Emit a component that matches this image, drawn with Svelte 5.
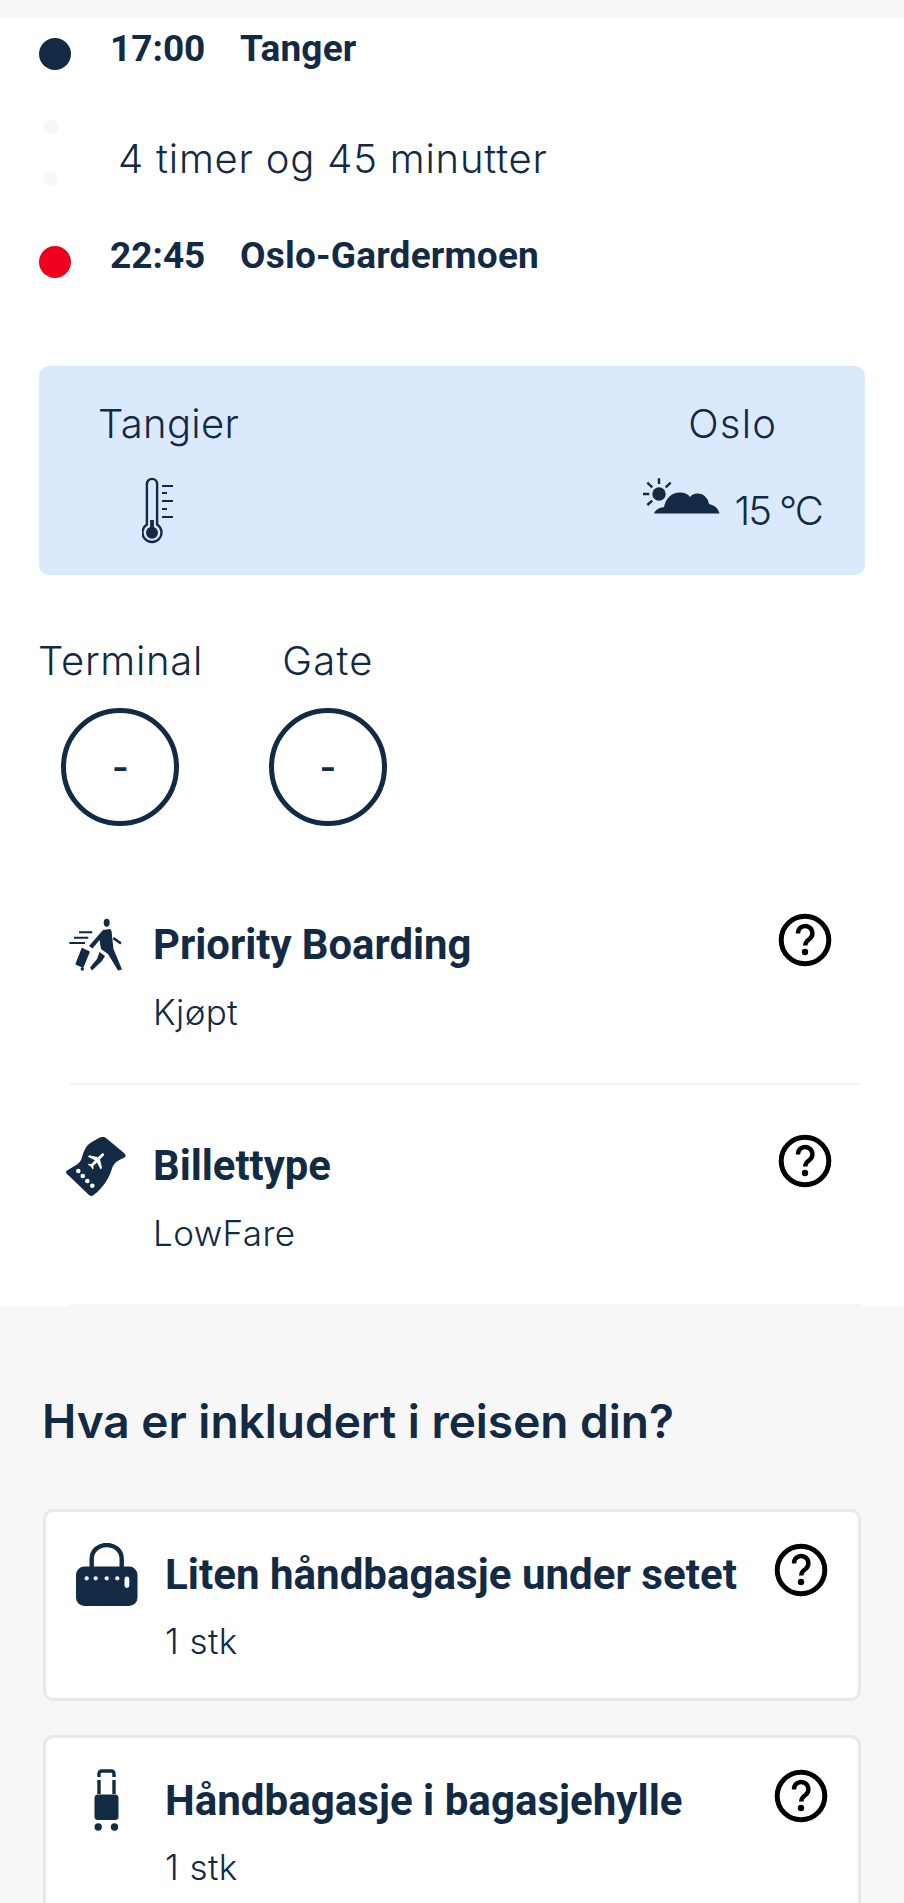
<script>
	const flightExtras = [
		{ title: 'Priority Boarding', sub: 'Kjøpt', icon: 'priority' },
		{ title: 'Billettype', sub: 'LowFare', icon: 'ticket' }
	];
	const included = [
		{ title: 'Liten håndbagasje under setet', sub: '1 stk', icon: 'bag' },
		{ title: 'Håndbagasje i bagasjehylle', sub: '1 stk', icon: 'trolley' }
	];
</script>

{#snippet help()}
	<svg class="help" width="54" height="54" viewBox="0 0 54 54" fill="none" stroke="#000">
		<circle cx="27" cy="27" r="23.800" stroke-width="5" />
		<path d="M20 20.500a7.200 7.200 0 1 1 11.500 5.500c-3 2-4.300 3.500-4.300 6.500" stroke-width="4.400" />
		<circle cx="27" cy="39" r="3.200" fill="#000" stroke="none" />
	</svg>
{/snippet}

{#snippet icon(name)}
	{#if name === 'priority'}
		<svg width="60" height="60" viewBox="0 0 60 60" fill="#132a45">
			<ellipse cx="41.700" cy="6.700" rx="3" ry="4" />
			<path d="M38 14L45 13Q47 14 47 20L48.500 33L57 53.500L53 54.500L43 38L36 33L34.500 24L27.500 32.500L24 30Z" />
			<path d="M34.500 36L40 40L37 45L27 54.500L25 51.500L32 43Z" />
			<path d="M48.300 22L56 27.500" fill="none" stroke="#132a45" stroke-width="2.600" />
			<path d="M17.200 32.700L24 36L17.800 51L11.200 48Z" stroke="#132a45" stroke-width="1.600" stroke-linejoin="round" />
			<circle cx="17.300" cy="53" r="1.700" />
			<path d="M14 16.300h13.300M9 21.700h14.300M4.300 27h15.700" fill="none" stroke="#132a45" stroke-width="2" />
		</svg>
	{:else if name === 'ticket'}
		<svg width="62" height="60" viewBox="0 0 62 60" fill="#132a45">
			<path d="M33 1.500Q38-1.500 41 1L59 16Q62 19 59.500 20.500Q50 24 47.500 30Q44 42 37 50Q33 55 28 58.500Q26 59.500 24 58L2 37Q0 35 2 33.500L12 27.500Q16 25 17 20Q20 9 26 5.500Z" />
			<g fill="#fff">
				<circle cx="13.300" cy="34" r="2.300" />
				<circle cx="17.700" cy="39" r="2.300" />
				<circle cx="22.300" cy="44" r="2.300" />
				<circle cx="27.300" cy="48.700" r="2.300" />
				<path transform="translate(32.300 23.700) rotate(45) scale(.95) translate(-12 -12)" d="M21 16v-2l-8-5V3.500c0-.83-.67-1.500-1.500-1.500S10 2.670 10 3.500V9l-8 5v2l8-2.500V19l-2 1.500V22l3.500-1 3.500 1v-1.500L13 19v-5.500l8 2.500z" />
			</g>
		</svg>
	{:else if name === 'bag'}
		<svg width="62" height="63" viewBox="0 0 62 63" fill="#132a45">
			<path d="M15.700 24v-8.500c0-8 7-13.500 15-13.500s15 5.500 15 13.500V24" fill="none" stroke="#132a45" stroke-width="4.400" />
			<rect x="0" y="23.500" width="61.500" height="39.500" rx="8.500" />
			<g fill="#fff">
				<circle cx="10.700" cy="35.300" r="2.100" />
				<circle cx="19.700" cy="35.300" r="2.100" />
				<circle cx="30.700" cy="35.300" r="2.100" />
				<circle cx="41.300" cy="35.300" r="2.100" />
				<rect x="48.500" y="33.500" width="4.800" height="11.500" rx="2.400" />
			</g>
		</svg>
	{:else}
		<svg width="25" height="63" viewBox="0 0 25 63" fill="#132a45">
			<path d="M5 8V5q0-3 3-3h9q3 0 3 3v3" fill="none" stroke="#132a45" stroke-width="3.400" />
			<path d="M5 11v14M20 11v14" fill="none" stroke="#132a45" stroke-width="3.400" />
			<rect x=".500" y="25.500" width="24" height="25.500" rx="3.500" />
			<circle cx="4.200" cy="58" r="3.700" />
			<circle cx="20.500" cy="58" r="3.700" />
		</svg>
	{/if}
{/snippet}

<div class="page">
	<section class="flight">
		<div class="stop">
			<span class="dot"></span>
			<span class="time">17:00</span>
			<span class="place">Tanger</span>
		</div>
		<div class="leg">
			<div class="leg-dots"><span></span><span></span></div>
			<span class="duration">4 timer og 45 minutter</span>
		</div>
		<div class="stop">
			<span class="dot arrival"></span>
			<span class="time">22:45</span>
			<span class="place">Oslo-Gardermoen</span>
		</div>

		<div class="weather">
			<div class="city">
				<div class="city-name">Tangier</div>
				<div class="city-temp no-data">
					<svg width="32" height="67" viewBox="0 0 32 67" fill="none" stroke="#132a45">
						<path d="M4.900 47.500V7a5.100 5.100 0 0 1 10.200 0V47.500a9.500 9.500 0 1 1-10.200 0z" stroke-width="2.400" />
						<circle cx="10" cy="55.700" r="6" fill="#132a45" stroke="none" />
						<rect x="8.100" y="43" width="3.800" height="10" fill="#132a45" stroke="none" />
						<path d="M20 9h11M20 16h5M20 24h11M20 32h5M20 40h11" stroke-width="2" />
					</svg>
				</div>
			</div>
			<div class="city">
				<div class="city-name oslo">Oslo</div>
				<div class="city-temp">
					<svg width="77" height="37" viewBox="0 0 77 37" fill="#132a45">
						<circle cx="16" cy="17" r="6.700" />
						<path d="M16 1.300V7M0 17h6.300M4.300 5.700l5 4.600M27.700 5.700l-5 4.600M4.300 28l5-4.300" stroke="#132a45" stroke-width="2.400" fill="none" />
						<path d="M11 36.500Q13 31 21 30Q24 16 37 15.500Q44 15.500 47 20Q50 16 55 16.500Q64 17 66 27Q75 29 76.500 36.500Z" />
					</svg>
					<span class="degrees">15 °C</span>
				</div>
			</div>
		</div>

		<div class="counters">
			<div class="counter">
				<div class="counter-label">Terminal</div>
				<div class="counter-value">-</div>
			</div>
			<div class="counter">
				<div class="counter-label gate">Gate</div>
				<div class="counter-value">-</div>
			</div>
		</div>

		<div class="extras">
			{#each flightExtras as row}
				<div class="extra">
					<div class="extra-icon">{@render icon(row.icon)}</div>
					<div class="extra-text">
						<div class="title">{row.title}</div>
						<div class="sub">{row.sub}</div>
					</div>
					{@render help()}
				</div>
			{/each}
		</div>
	</section>

	<section class="included">
		<h2>Hva er inkludert i reisen din?</h2>
		<div class="cards">
			{#each included as row}
				<div class="card">
					<div class="card-icon">{@render icon(row.icon)}</div>
					<div class="card-text">
						<div class="title">{row.title}</div>
						<div class="sub">{row.sub}</div>
					</div>
					{@render help()}
				</div>
			{/each}
		</div>
	</section>
</div>

<style>
	:global(body) {
		background: #f7f7f7;
	}

	.page {
		height: 1903px;
		overflow: hidden;
		padding-top: 18px;
		box-sizing: border-box;
		color: #132a45;
		font-family: Inter, sans-serif;
		font-weight: 300;
	}

	.flight {
		background: #fff;
		padding-top: 9px;
		height: 1288px;
		box-sizing: border-box;
	}

	.stop {
		display: flex;
		align-items: flex-start;
		font-family: Roboto, sans-serif;
		font-weight: 700;
		font-size: 37px;
		line-height: 44px;
		padding-left: 39px;
	}

	.dot {
		width: 32px;
		height: 32px;
		border-radius: 50%;
		background: #132a45;
		margin-top: 11px;
		margin-right: 39px;
	}

	.dot.arrival {
		background: #f0001e;
		margin-top: 12px;
	}

	.time {
		width: 130px;
	}

	.place {
		letter-spacing: 0.2px;
	}

	.leg {
		display: flex;
		align-items: center;
		height: 163px;
		padding-left: 44px;
	}

	.leg-dots {
		display: flex;
		flex-direction: column;
		gap: 38px;
		margin-right: 60px;
	}

	.leg-dots span {
		width: 14px;
		height: 14px;
		border-radius: 50%;
		background: #f7f7f7;
	}

	.duration {
		font-size: 40px;
		line-height: 46px;
		letter-spacing: 0.8px;
		padding-top: 13px;
	}

	.weather {
		display: flex;
		justify-content: space-between;
		margin: 88px 39px 0;
		height: 209px;
		box-sizing: border-box;
		padding: 35px 43px 0 59px;
		background: #dbe9fc;
		border-radius: 10px;
	}

	.city {
		display: flex;
		flex-direction: column;
		align-items: center;
	}

	.city-name {
		font-size: 40px;
		line-height: 46px;
		letter-spacing: 0.3px;
	}

	.city-name.oslo {
		letter-spacing: 1.2px;
	}

	.city-temp {
		display: flex;
		align-items: flex-start;
		gap: 14px;
		margin-top: 30px;
	}

	.city-temp.no-data {
		padding-right: 22px;
	}

	.degrees {
		font-size: 40px;
		line-height: 46px;
		margin-top: 11px;
		letter-spacing: -2px;
	}

	.counters {
		display: flex;
		gap: 66px;
		margin: 63px 0 0 38px;
	}

	.counter {
		display: flex;
		flex-direction: column;
		align-items: center;
		gap: 24px;
	}

	.counter-label {
		font-size: 40px;
		line-height: 46px;
		letter-spacing: 0.7px;
	}

	.counter-label.gate {
		letter-spacing: 1.2px;
	}

	.counter-value {
		width: 118px;
		height: 118px;
		box-sizing: border-box;
		border: 5px solid #132a45;
		border-radius: 50%;
		display: flex;
		align-items: center;
		justify-content: center;
		font-size: 36px;
		font-weight: 600;
	}

	.extras {
		margin: 38px 42px 0 70px;
	}

	.extra {
		display: flex;
		align-items: flex-start;
		padding: 57px 0 50px;
		border-bottom: 2px solid #f5f5f5;
	}

	.extra-icon {
		width: 85px;
		margin-top: -5px;
		margin-left: -5px;
		margin-right: 3px;
	}

	.extra .help {
		margin: -8px 30px 0 auto;
	}

	.title {
		font-family: Roboto, sans-serif;
		font-weight: 700;
		font-size: 41.8px;
		line-height: 48px;
	}

	.sub {
		font-size: 35px;
		line-height: 42px;
		letter-spacing: 0.4px;
		margin-top: 22px;
	}

	.included {
		padding: 88px 43px 0;
	}

	h2 {
		margin: 0 0 0 -1px;
		font-size: 46px;
		line-height: 54px;
		font-weight: 600;
	}

	.cards {
		display: flex;
		flex-direction: column;
		gap: 34px;
		margin-top: 61px;
	}

	.card {
		display: flex;
		align-items: flex-start;
		background: #fff;
		border: 3px solid #ebe9e4;
		border-radius: 10px;
		padding: 39px 0 36px;
	}

	.card .title {
		font-size: 42.1px;
	}

	.card .sub {
		margin-top: 21px;
	}

	.card-icon {
		width: 117px;
		display: flex;
		justify-content: center;
		margin-left: 2px;
		margin-top: -8px;
	}

	.card .help {
		margin: -8px 30px 0 auto;
	}
</style>
